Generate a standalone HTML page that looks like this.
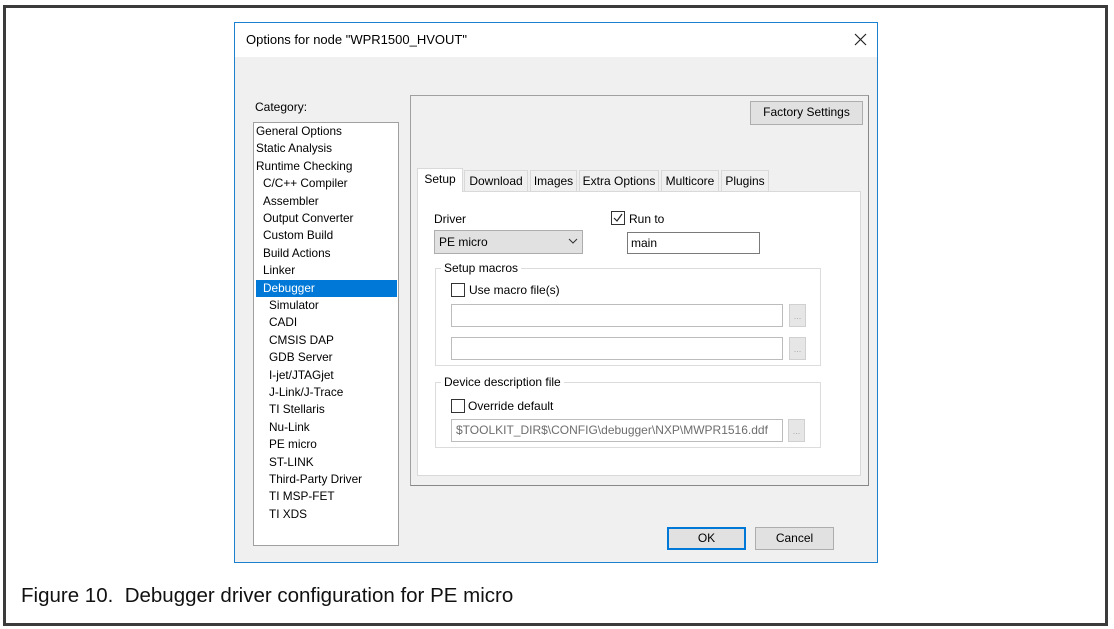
<!DOCTYPE html>
<html><head><meta charset="utf-8"><style>
*{margin:0;padding:0;box-sizing:border-box}
body{width:1114px;height:629px;background:#fff;position:relative;overflow:hidden;font-family:"Liberation Sans",sans-serif;font-size:12px;color:#000}
.a{position:absolute}
.frame{left:3px;top:5px;width:1105px;height:621px;border:3px solid #3b3b3b}
.dlg{left:234px;top:22px;width:644px;height:541px;border:1px solid #1c80d0;background:#f0f0f0}
.title{left:0;top:0;width:642px;height:34px;background:#fff}
.list{left:18px;top:99px;width:146px;height:424px;background:#fff;border:1px solid #a0a0a0}
.it{position:absolute;left:2px;height:17.4px;line-height:17px;white-space:nowrap;width:141px;font-size:11.8px}
.btn{background:#e1e1e1;border:1px solid #adadad;text-align:center;line-height:20px}
.tf{background:#fff;border:1px solid #bcbcbc}
.grp{border:1px solid #dcdcdc}
.cb{width:14px;height:14px;border:1px solid #333;background:#fff}
.sb{width:17px;height:23px;background:#e6e6e6;border:1px solid #d0d0d0;color:#aaa;font-size:9px;text-align:center;line-height:22px}
.tab{position:absolute;top:0;height:21px;line-height:21px;border:1px solid #d9d9d9;border-bottom:none;background:#f0f0f0;text-align:center}
</style></head><body>
<div class="a frame"></div>
<div class="a dlg">
 <div class="a title"></div>
 <div class="a" style="left:11px;top:9px;font-size:13px">Options for node "WPR1500_HVOUT"</div>
 <svg class="a" style="left:619px;top:10px" width="13" height="13"><path d="M1 1L12 12M12 1L1 12" stroke="#222" stroke-width="1.2"/></svg>
 <div class="a" style="left:20px;top:77px">Category:</div>
 <div class="a list">
  <div class="it" style="top:0">General Options</div>
  <div class="it" style="top:17.4px">Static Analysis</div>
  <div class="it" style="top:34.8px">Runtime Checking</div>
  <div class="it" style="top:52.2px;padding-left:7px">C/C++ Compiler</div>
  <div class="it" style="top:69.6px;padding-left:7px">Assembler</div>
  <div class="it" style="top:87px;padding-left:7px">Output Converter</div>
  <div class="it" style="top:104.4px;padding-left:7px">Custom Build</div>
  <div class="it" style="top:121.8px;padding-left:7px">Build Actions</div>
  <div class="it" style="top:139.2px;padding-left:7px">Linker</div>
  <div class="it" style="top:156.6px;padding-left:7px;background:#0078d7;color:#fff">Debugger</div>
  <div class="it" style="top:174px;padding-left:13px">Simulator</div>
  <div class="it" style="top:191.4px;padding-left:13px">CADI</div>
  <div class="it" style="top:208.8px;padding-left:13px">CMSIS DAP</div>
  <div class="it" style="top:226.2px;padding-left:13px">GDB Server</div>
  <div class="it" style="top:243.6px;padding-left:13px">I-jet/JTAGjet</div>
  <div class="it" style="top:261px;padding-left:13px">J-Link/J-Trace</div>
  <div class="it" style="top:278.4px;padding-left:13px">TI Stellaris</div>
  <div class="it" style="top:295.8px;padding-left:13px">Nu-Link</div>
  <div class="it" style="top:313.2px;padding-left:13px">PE micro</div>
  <div class="it" style="top:330.6px;padding-left:13px">ST-LINK</div>
  <div class="it" style="top:348px;padding-left:13px">Third-Party Driver</div>
  <div class="it" style="top:365.4px;padding-left:13px">TI MSP-FET</div>
  <div class="it" style="top:382.8px;padding-left:13px">TI XDS</div>
 </div>
 <div class="a" style="left:175px;top:72px;width:459px;height:391px;border:1px solid #a0a0a0;border-right-color:#888;border-bottom-color:#888"></div>
 <div class="a btn" style="left:515px;top:78px;width:113px;height:24px;border-color:#adadad">Factory Settings</div>
 <div class="a" style="left:182px;top:147px;width:444px;height:306px">
  <div class="a" style="left:0;top:21px;width:444px;height:285px;background:#fff;border:1px solid #d9d9d9"></div>
  <div class="tab" style="left:0;top:-2px;height:24px;width:46px;background:#fff;z-index:2">Setup</div>
  <div class="tab" style="left:47px;width:64px">Download</div>
  <div class="tab" style="left:113px;width:47px">Images</div>
  <div class="tab" style="left:162px;width:80px">Extra Options</div>
  <div class="tab" style="left:244px;width:58px">Multicore</div>
  <div class="tab" style="left:304px;width:48px">Plugins</div>
 </div>
 <div class="a" style="left:199px;top:189px">Driver</div>
 <div class="a" style="left:199px;top:207px;width:149px;height:24px;background:#e1e1e1;border:1px solid #adadad;padding-left:4px;line-height:22px">PE micro</div>
 <svg class="a" style="left:333px;top:215px" width="10" height="7"><path d="M1 1L5 5L9 1" stroke="#333" fill="none"/></svg>
 <div class="a cb" style="left:376px;top:188px"></div>
 <svg class="a" style="left:377px;top:189px" width="12" height="12"><path d="M2 6L5 9L10 2" stroke="#222" fill="none" stroke-width="1.2"/></svg>
 <div class="a" style="left:394px;top:189px">Run to</div>
 <div class="a tf" style="left:392px;top:209px;width:133px;height:22px;border-color:#7a7a7a;padding-left:3px;line-height:20px">main</div>
 <div class="a grp" style="left:200px;top:245px;width:386px;height:98px"></div>
 <div class="a" style="left:206px;top:238px;background:#fff;padding:0 3px">Setup macros</div>
 <div class="a cb" style="left:216px;top:260px"></div>
 <div class="a" style="left:234px;top:260px">Use macro file(s)</div>
 <div class="a tf" style="left:216px;top:281px;width:332px;height:23px"></div>
 <div class="a sb" style="left:554px;top:281px">...</div>
 <div class="a tf" style="left:216px;top:314px;width:332px;height:23px"></div>
 <div class="a sb" style="left:554px;top:314px">...</div>
 <div class="a grp" style="left:200px;top:359px;width:386px;height:66px"></div>
 <div class="a" style="left:206px;top:352px;background:#fff;padding:0 3px">Device description file</div>
 <div class="a cb" style="left:216px;top:376px"></div>
 <div class="a" style="left:233px;top:376px">Override default</div>
 <div class="a tf" style="left:216px;top:396px;width:332px;height:23px;color:#6d6d6d;padding-left:4px;line-height:21px">$TOOLKIT_DIR$\CONFIG\debugger\NXP\MWPR1516.ddf</div>
 <div class="a sb" style="left:553px;top:396px">...</div>
 <div class="a btn" style="left:432px;top:504px;width:79px;height:23px;border:2px solid #0078d7;line-height:19px">OK</div>
 <div class="a btn" style="left:520px;top:504px;width:79px;height:23px">Cancel</div>
</div>
<div class="a" style="left:21px;top:584px;font-size:20.5px;color:#111">Figure 10.&nbsp; Debugger driver configuration for PE micro</div>
</body></html>
